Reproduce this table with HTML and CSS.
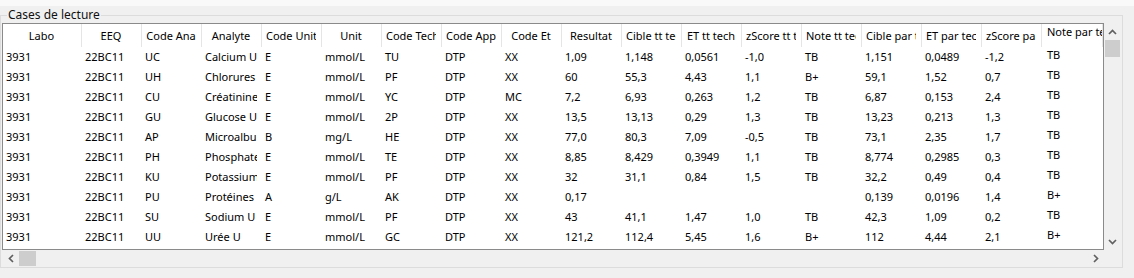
FILE: index.html
```html
<!DOCTYPE html>
<html lang="fr">
<head>
<meta charset="utf-8">
<title>Cases de lecture</title>
<link rel="stylesheet" href="styles.css">
</head>
<body>
<div class="topband"></div>
<fieldset class="groupbox">
  <legend>Cases de lecture</legend>
  <div class="viewport">
    <div class="table">
      <div class="row head">
        <div class="cell">Labo</div><div class="cell">EEQ</div><div class="cell">Code Ana</div><div class="cell">Analyte</div><div class="cell">Code Unit</div><div class="cell">Unit</div><div class="cell">Code Tech</div><div class="cell">Code App</div><div class="cell">Code Et</div><div class="cell">Resultat</div><div class="cell">Cible tt tech</div><div class="cell">ET tt tech</div><div class="cell">zScore tt tech</div><div class="cell">Note tt tech</div><div class="cell">Cible par tech</div><div class="cell">ET par tech</div><div class="cell">zScore par tech</div><div class="cell last">Note par tech</div>
      </div>
      <div class="row">
        <div class="cell">3931</div><div class="cell">22BC11</div><div class="cell">UC</div><div class="cell">Calcium Urinaire</div><div class="cell">E</div><div class="cell">mmol/L</div><div class="cell">TU</div><div class="cell">DTP</div><div class="cell">XX</div><div class="cell">1,09</div><div class="cell">1,148</div><div class="cell">0,0561</div><div class="cell">-1,0</div><div class="cell">TB</div><div class="cell">1,151</div><div class="cell">0,0489</div><div class="cell">-1,2</div><div class="cell last">TB</div>
      </div>
      <div class="row">
        <div class="cell">3931</div><div class="cell">22BC11</div><div class="cell">UH</div><div class="cell">Chlorures U</div><div class="cell">E</div><div class="cell">mmol/L</div><div class="cell">PF</div><div class="cell">DTP</div><div class="cell">XX</div><div class="cell">60</div><div class="cell">55,3</div><div class="cell">4,43</div><div class="cell">1,1</div><div class="cell">B+</div><div class="cell">59,1</div><div class="cell">1,52</div><div class="cell">0,7</div><div class="cell last">TB</div>
      </div>
      <div class="row">
        <div class="cell">3931</div><div class="cell">22BC11</div><div class="cell">CU</div><div class="cell">Créatinine U</div><div class="cell">E</div><div class="cell">mmol/L</div><div class="cell">YC</div><div class="cell">DTP</div><div class="cell">MC</div><div class="cell">7,2</div><div class="cell">6,93</div><div class="cell">0,263</div><div class="cell">1,2</div><div class="cell">TB</div><div class="cell">6,87</div><div class="cell">0,153</div><div class="cell">2,4</div><div class="cell last">TB</div>
      </div>
      <div class="row">
        <div class="cell">3931</div><div class="cell">22BC11</div><div class="cell">GU</div><div class="cell">Glucose U</div><div class="cell">E</div><div class="cell">mmol/L</div><div class="cell">2P</div><div class="cell">DTP</div><div class="cell">XX</div><div class="cell">13,5</div><div class="cell">13,13</div><div class="cell">0,29</div><div class="cell">1,3</div><div class="cell">TB</div><div class="cell">13,23</div><div class="cell">0,213</div><div class="cell">1,3</div><div class="cell last">TB</div>
      </div>
      <div class="row">
        <div class="cell">3931</div><div class="cell">22BC11</div><div class="cell">AP</div><div class="cell">Microalbuminurie</div><div class="cell">B</div><div class="cell">mg/L</div><div class="cell">HE</div><div class="cell">DTP</div><div class="cell">XX</div><div class="cell">77,0</div><div class="cell">80,3</div><div class="cell">7,09</div><div class="cell">-0,5</div><div class="cell">TB</div><div class="cell">73,1</div><div class="cell">2,35</div><div class="cell">1,7</div><div class="cell last">TB</div>
      </div>
      <div class="row">
        <div class="cell">3931</div><div class="cell">22BC11</div><div class="cell">PH</div><div class="cell">Phosphates U</div><div class="cell">E</div><div class="cell">mmol/L</div><div class="cell">TE</div><div class="cell">DTP</div><div class="cell">XX</div><div class="cell">8,85</div><div class="cell">8,429</div><div class="cell">0,3949</div><div class="cell">1,1</div><div class="cell">TB</div><div class="cell">8,774</div><div class="cell">0,2985</div><div class="cell">0,3</div><div class="cell last">TB</div>
      </div>
      <div class="row">
        <div class="cell">3931</div><div class="cell">22BC11</div><div class="cell">KU</div><div class="cell">Potassium U</div><div class="cell">E</div><div class="cell">mmol/L</div><div class="cell">PF</div><div class="cell">DTP</div><div class="cell">XX</div><div class="cell">32</div><div class="cell">31,1</div><div class="cell">0,84</div><div class="cell">1,5</div><div class="cell">TB</div><div class="cell">32,2</div><div class="cell">0,49</div><div class="cell">0,4</div><div class="cell last">TB</div>
      </div>
      <div class="row">
        <div class="cell">3931</div><div class="cell">22BC11</div><div class="cell">PU</div><div class="cell">Protéines U</div><div class="cell">A</div><div class="cell">g/L</div><div class="cell">AK</div><div class="cell">DTP</div><div class="cell">XX</div><div class="cell">0,17</div><div class="cell"></div><div class="cell"></div><div class="cell"></div><div class="cell"></div><div class="cell">0,139</div><div class="cell">0,0196</div><div class="cell">1,4</div><div class="cell last">B+</div>
      </div>
      <div class="row">
        <div class="cell">3931</div><div class="cell">22BC11</div><div class="cell">SU</div><div class="cell">Sodium U</div><div class="cell">E</div><div class="cell">mmol/L</div><div class="cell">PF</div><div class="cell">DTP</div><div class="cell">XX</div><div class="cell">43</div><div class="cell">41,1</div><div class="cell">1,47</div><div class="cell">1,0</div><div class="cell">TB</div><div class="cell">42,3</div><div class="cell">1,09</div><div class="cell">0,2</div><div class="cell last">TB</div>
      </div>
      <div class="row">
        <div class="cell">3931</div><div class="cell">22BC11</div><div class="cell">UU</div><div class="cell">Urée U</div><div class="cell">E</div><div class="cell">mmol/L</div><div class="cell">GC</div><div class="cell">DTP</div><div class="cell">XX</div><div class="cell">121,2</div><div class="cell">112,4</div><div class="cell">5,45</div><div class="cell">1,6</div><div class="cell">B+</div><div class="cell">112</div><div class="cell">4,44</div><div class="cell">2,1</div><div class="cell last">B+</div>
      </div>
    </div>
    <div class="vscroll">
      <div class="sbtn"><svg width="9" height="6" viewBox="0 0 9 6"><polyline points="1,5 4.5,1.5 8,5" class="chev"/></svg></div>
      <div class="vthumb"></div>
      <div class="vtrack"></div>
      <div class="sbtn"><svg width="9" height="6" viewBox="0 0 9 6"><polyline points="1,1 4.5,4.5 8,1" class="chev"/></svg></div>
    </div>
    <div class="hscroll">
      <div class="sbtn"><svg width="6" height="9" viewBox="0 0 6 9"><polyline points="5,1 1.5,4.5 5,8" class="chev"/></svg></div>
      <div class="hthumb"></div>
      <div class="htrack"></div>
      <div class="sbtn"><svg width="6" height="9" viewBox="0 0 6 9"><polyline points="1,1 4.5,4.5 1,8" class="chev"/></svg></div>
    </div>
    <div class="corner"></div>
  </div>
</fieldset>
</body>
</html>
```
FILE: styles.css
```css
* { box-sizing: border-box; }
html, body { margin: 0; padding: 0; }
body {
  width: 1134px;
  height: 278px;
  overflow: hidden;
  background: #f0f0f0;
  font-family: "Noto Sans", "Open Sans", "DejaVu Sans", sans-serif;
  font-size: 11px;
  color: #000;
}
.topband { height: 6px; background: #f9f9f9; }
.groupbox {
  margin: 1px 0 0 0;
  padding: 0;
  width: 1123px;
  min-inline-size: 0;
  border: 1px solid #dcdcdc;
}
.groupbox > legend {
  margin-left: 6px;
  padding: 0 1px;
  font-size: 12px;
  line-height: 16px;
  color: #111;
}
.viewport {
  display: grid;
  grid-template-columns: 1102px 17px;
  grid-template-rows: 227px 17px;
  margin-left: 1px;
}
.table {
  border: 1px solid #8a8a8a;
  background: #fff;
  overflow: hidden;
}
.row {
  display: grid;
  grid-template-columns: 79px repeat(16, 60px) 61px;
  height: 20px;
  line-height: 20px;
}
.row.head { height: 23px; line-height: 23px; }
/* overflow clips at the padding edge, so the right gutter is a transparent border */
.cell {
  overflow: hidden;
  white-space: nowrap;
  padding-left: 3px;
  border-right: 5px solid transparent;
}
.head .cell {
  text-align: center;
  padding-left: 4px;
  border-right: 6px solid transparent;
  background: linear-gradient(to left, #e5e5e5 1px, transparent 1px) border-box;
}
.head .cell.last {
  text-align: left;
  line-height: 17px;
  padding-left: 6px;
  border-right-width: 1px;
}
.row .cell.last { line-height: 16px; padding-left: 5px; }
.vscroll { display: flex; flex-direction: column; }
.hscroll { display: flex; flex-direction: row; }
.sbtn {
  flex: 0 0 17px;
  display: flex;
  align-items: center;
  justify-content: center;
}
.chev { fill: none; stroke: #606060; stroke-width: 1.7; }
.vthumb { flex: 0 0 17px; margin: 0 1px; background: #cdcdcd; }
.vtrack, .htrack { flex: 1; }
.hthumb { flex: 0 0 17px; margin: 1px 0; background: #cdcdcd; }
```
